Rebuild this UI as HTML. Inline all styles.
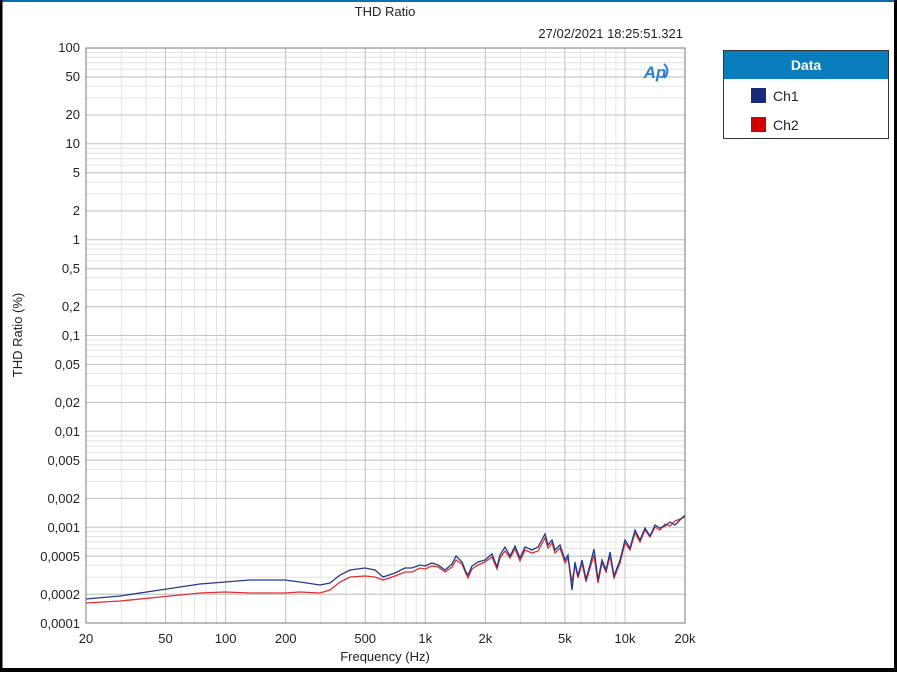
<!DOCTYPE html>
<html><head><meta charset="utf-8"><style>
body{margin:0;width:897px;height:672px;overflow:hidden;background:#fff;font-family:"Liberation Sans",sans-serif}
</style></head><body>
<svg width="897" height="672" xmlns="http://www.w3.org/2000/svg" font-family="Liberation Sans, sans-serif">
<rect x="0" y="0" width="897" height="672" fill="#fff"/>
<rect x="0" y="0" width="897" height="2" fill="#0a6fb0"/>
<rect x="0" y="0" width="2.5" height="672" fill="#000"/>
<rect x="0" y="668" width="897" height="4" fill="#000"/>
<rect x="894" y="0" width="3" height="672" fill="#000"/>
<text x="385" y="16" font-size="13" text-anchor="middle" fill="#222">THD Ratio</text>
<text x="683" y="38" font-size="13" text-anchor="end" fill="#222">27/02/2021 18:25:51.321</text>
<defs>
<g id="xd" stroke="#e4e4e4" stroke-width="1">
<line x1="60.1" y1="48" x2="60.1" y2="623"/><line x1="95.3" y1="48" x2="95.3" y2="623"/><line x1="120.2" y1="48" x2="120.2" y2="623"/><line x1="139.6" y1="48" x2="139.6" y2="623"/><line x1="155.4" y1="48" x2="155.4" y2="623"/><line x1="168.8" y1="48" x2="168.8" y2="623"/><line x1="180.3" y1="48" x2="180.3" y2="623"/><line x1="190.6" y1="48" x2="190.6" y2="623"/>
</g>
<g id="yd" stroke="#e4e4e4" stroke-width="1">
<line x1="86" x2="685" y1="-28.8" y2="-28.8"/><line x1="86" x2="685" y1="-45.7" y2="-45.7"/><line x1="86" x2="685" y1="-57.7" y2="-57.7"/><line x1="86" x2="685" y1="-67" y2="-67"/><line x1="86" x2="685" y1="-74.6" y2="-74.6"/><line x1="86" x2="685" y1="-81" y2="-81"/><line x1="86" x2="685" y1="-86.5" y2="-86.5"/><line x1="86" x2="685" y1="-91.4" y2="-91.4"/>
</g>
<clipPath id="c"><rect x="86" y="48" width="599" height="575"/></clipPath>
</defs>
<g clip-path="url(#c)">
<use href="#xd" x="25.9"/><use href="#xd" x="225.6"/><use href="#xd" x="425.3"/><use href="#xd" x="625"/>
<use href="#yd" y="623"/><use href="#yd" y="527.2"/><use href="#yd" y="431.3"/><use href="#yd" y="335.5"/><use href="#yd" y="239.7"/><use href="#yd" y="143.8"/>
<g stroke="#c4c4c4" stroke-width="1">
<line x1="165.5" x2="165.5" y1="48" y2="623"/><line x1="225.6" x2="225.6" y1="48" y2="623"/><line x1="285.7" x2="285.7" y1="48" y2="623"/><line x1="365.2" x2="365.2" y1="48" y2="623"/><line x1="425.3" x2="425.3" y1="48" y2="623"/><line x1="485.4" x2="485.4" y1="48" y2="623"/><line x1="564.9" x2="564.9" y1="48" y2="623"/><line x1="625" x2="625" y1="48" y2="623"/>
<line x1="86" x2="685" y1="77" y2="77"/><line x1="86" x2="685" y1="115" y2="115"/><line x1="86" x2="685" y1="143.8" y2="143.8"/><line x1="86" x2="685" y1="172.8" y2="172.8"/><line x1="86" x2="685" y1="210.9" y2="210.9"/><line x1="86" x2="685" y1="239.7" y2="239.7"/><line x1="86" x2="685" y1="268.7" y2="268.7"/><line x1="86" x2="685" y1="306.7" y2="306.7"/><line x1="86" x2="685" y1="335.5" y2="335.5"/><line x1="86" x2="685" y1="364.5" y2="364.5"/><line x1="86" x2="685" y1="402.5" y2="402.5"/><line x1="86" x2="685" y1="431.3" y2="431.3"/><line x1="86" x2="685" y1="460.3" y2="460.3"/><line x1="86" x2="685" y1="498.4" y2="498.4"/><line x1="86" x2="685" y1="527.2" y2="527.2"/><line x1="86" x2="685" y1="556.2" y2="556.2"/><line x1="86" x2="685" y1="594.2" y2="594.2"/>
</g>
<polyline fill="none" stroke="#e03030" stroke-width="1.3" points="86,603 120,601 160,597 200,593 225,592 250,593 285,593 300,592 320,593 330,590 340,582 350,577 365,576 375,577 383,580 395,576 405,572 412,572 420,568 425,569 432,566 438,567 445,572 452,567 456,560 462,564 466,574 468,578 472,569 478,565 485,562 492,557 497,569 500,558 505,551 510,558 515,549 520,561 525,550 532,553 538,551 545,538 548,548 552,543 555,553 560,548 565,563 568,558 572,582 575,565 578,578 582,563 586,582 590,568 594,555 598,583 602,563 606,572 610,556 614,578 620,563 625,543 630,550 635,533 640,542 645,530 650,537 655,527 660,530 665,524 670,526 675,521 680,519 685,517"/>
<polyline fill="none" stroke="#233a8a" stroke-width="1.3" points="86,599 120,596 160,590 200,584 225,582 250,580 285,580 300,582 320,585 330,583 340,575 350,570 365,568 375,570 383,577 395,573 405,568 412,568 420,565 425,566 432,563 438,565 445,570 452,564 456,556 462,562 466,572 468,575 472,566 478,562 485,560 492,554 497,567 500,555 505,547 510,556 515,546 520,558 525,547 532,550 538,547 545,534 548,545 552,540 555,550 560,545 565,560 568,555 572,590 575,562 578,576 582,560 586,579 590,565 594,549 598,580 602,560 606,570 610,552 614,576 620,560 625,540 630,548 635,530 640,540 645,528 650,536 655,525 660,528 665,526 670,522 675,525 680,520 685,515"/>
</g>
<rect x="86" y="48" width="599" height="575" fill="none" stroke="#777" stroke-width="1"/>
<g font-size="13" fill="#222" text-anchor="end">
<text x="80" y="52">100</text><text x="80" y="81">50</text><text x="80" y="119">20</text><text x="80" y="148">10</text><text x="80" y="177">5</text><text x="80" y="215">2</text><text x="80" y="244">1</text><text x="80" y="273">0,5</text><text x="80" y="311">0,2</text><text x="80" y="340">0,1</text><text x="80" y="369">0,05</text><text x="80" y="407">0,02</text><text x="80" y="436">0,01</text><text x="80" y="465">0,005</text><text x="80" y="503">0,002</text><text x="80" y="532">0,001</text><text x="80" y="561">0,0005</text><text x="80" y="599">0,0002</text><text x="80" y="628">0,0001</text>
</g>
<g font-size="13" fill="#222" text-anchor="middle">
<text x="86" y="643">20</text><text x="165.5" y="643">50</text><text x="225.6" y="643">100</text><text x="285.7" y="643">200</text><text x="365.2" y="643">500</text><text x="425.3" y="643">1k</text><text x="485.4" y="643">2k</text><text x="564.9" y="643">5k</text><text x="625" y="643">10k</text><text x="685" y="643">20k</text>
<text x="385" y="661">Frequency (Hz)</text>
</g>
<text transform="translate(22,335) rotate(-90)" font-size="13" fill="#222" text-anchor="middle">THD Ratio (%)</text>
<text x="655" y="78" font-size="17" font-style="italic" font-weight="bold" fill="#2a7fd0" text-anchor="middle">Ap</text>
<path d="M664 64 a9 9 0 0 1 0 14" fill="none" stroke="#2a7fd0" stroke-width="2"/>
<rect x="723.5" y="50.5" width="165" height="88" fill="#fff" stroke="#333" stroke-width="1"/>
<rect x="724" y="51" width="164" height="28" fill="#0a7dbd"/>
<text x="806" y="70" font-size="14" font-weight="bold" fill="#fff" text-anchor="middle">Data</text>
<rect x="751" y="88" width="15" height="15" fill="#1a2a7a"/>
<text x="773" y="101" font-size="14" fill="#222">Ch1</text>
<rect x="751" y="117" width="15" height="15" fill="#d40000"/>
<text x="773" y="130" font-size="14" fill="#222">Ch2</text>
</svg>
</body></html>
